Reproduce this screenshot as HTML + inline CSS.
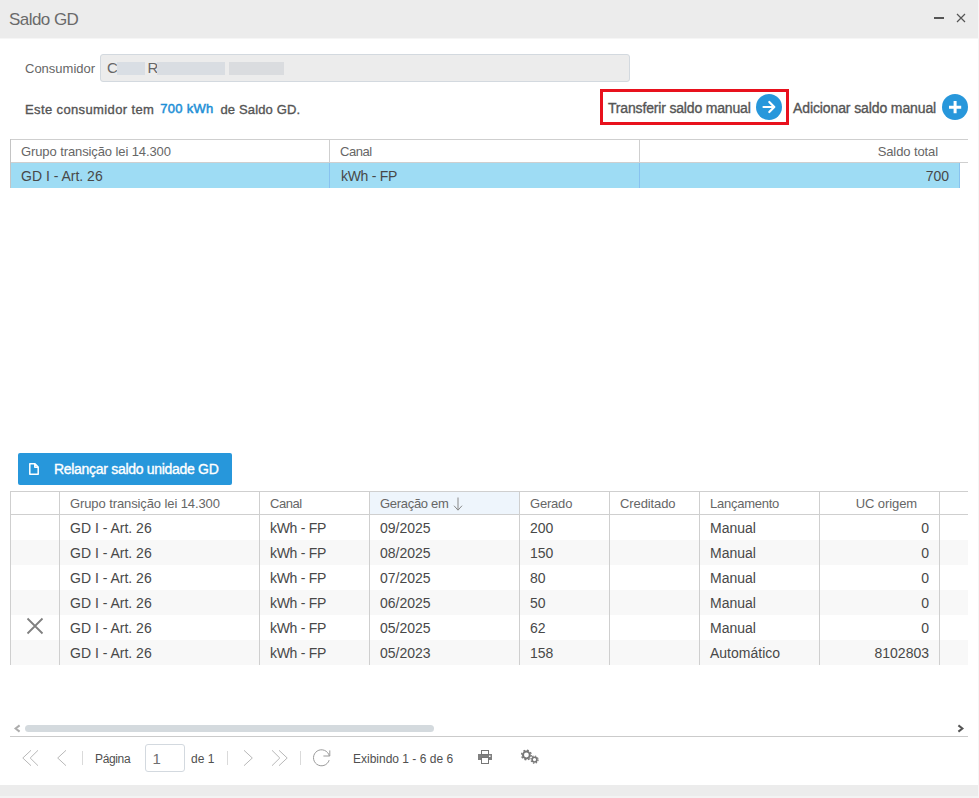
<!DOCTYPE html>
<html lang="pt-BR">
<head>
<meta charset="utf-8">
<title>Saldo GD</title>
<style>
*{box-sizing:border-box;margin:0;padding:0}
html,body{width:979px;height:798px;overflow:hidden;background:#fff}
body{font-family:"Liberation Sans",sans-serif;font-size:13px;color:#404040;position:relative}
.abs{position:absolute}
.titlebar{left:0;top:0;width:979px;height:38px;background:#ececec}
.title{left:9px;top:9px;font-size:17px;color:#6a6a6a;line-height:22px;white-space:nowrap;letter-spacing:-0.55px}
.bottombar{left:0;top:785px;width:979px;height:13px;background:#ececec}
.lbl{white-space:nowrap;line-height:16px}
.input{left:100px;top:54px;width:530px;height:28px;background:#ececec;border:1px solid #d3d9df;border-radius:3px}
.grid{border:1px solid #cfcfcf;background:#fff}
.hdr{letter-spacing:-0.1px;position:absolute;top:0;height:23px;border-right:1px solid #cfcfcf;color:#666;font-size:13px;line-height:23px;padding:0 10px;white-space:nowrap;overflow:hidden}
.row{position:absolute;left:0;height:25px}
.cell{position:absolute;top:0;height:25px;line-height:27px;padding:0 10px;font-size:14px;color:#484848;white-space:nowrap;border-right:1px solid #cfcfcf;overflow:hidden}
.r{text-align:right}
.sb{font-size:14px;color:#555;-webkit-text-stroke:0.35px #555}
.vl{top:0;width:1px;height:174px;background:#cfcfcf}
.h{letter-spacing:-0.1px;top:2px;height:22px;line-height:22px;font-size:13px;color:#666;white-space:nowrap}
.c{height:25px;line-height:27px;font-size:14px;color:#484848;white-space:nowrap}
</style>
</head>
<body>
<div class="abs titlebar"></div>
<div class="abs" style="left:0;top:38px;width:978px;height:1px;background:#f6f6f6"></div>
<div class="abs title">Saldo GD</div>
<div class="abs bottombar"></div>
<div class="abs" style="left:0;top:796px;width:979px;height:2px;background:#f3f3f3"></div>
<div class="abs" style="left:978px;top:0;width:1px;height:798px;background:#f6f6f6"></div>

<div class="abs lbl" style="left:25px;top:61px;color:#666">Consumidor</div>
<div class="abs input"></div>
<div class="abs lbl" style="left:107px;top:59px;color:#666;font-size:15px;line-height:18px">C</div>
<div class="abs lbl" style="left:147.5px;top:59px;color:#666;font-size:15px;line-height:18px">R</div>
<div class="abs" style="left:117px;top:62px;width:28px;height:13px;background:#d9dee4"></div>
<div class="abs" style="left:157px;top:62px;width:68px;height:13px;background:#d9dde2"></div>
<div class="abs" style="left:229px;top:62px;width:55px;height:13px;background:#dadcdf"></div>

<div class="abs lbl sb" id="t1" style="left:25px;top:102px;font-size:13px;letter-spacing:0.28px"><span id="s1" style="letter-spacing:0.38px">Este consumidor tem</span> <span id="s2" style="color:#1e8fd6;-webkit-text-stroke:0.5px #1e8fd6;position:relative;top:-1px;margin:0 3px 0 2px">700 kWh</span> <span id="s3" style="letter-spacing:0.15px">de Saldo GD.</span></div>

<div class="abs lbl sb" id="t2" style="left:608px;top:100px;letter-spacing:-0.17px">Transferir saldo manual</div>
<div class="abs lbl sb" id="t3" style="left:793px;top:100px;letter-spacing:-0.11px">Adicionar saldo manual</div>
<div class="abs" style="left:600px;top:89px;width:189px;height:36px;border:3px solid #e8111d"></div>

<!-- grid 1 -->
<div class="abs grid" style="left:10px;top:139px;width:958px;height:25px;border-bottom:none;border-right:none">
  <div class="hdr" style="left:0;width:319px">Grupo transição lei 14.300</div>
  <div class="hdr" style="left:319px;width:310px;letter-spacing:-0.45px">Canal</div>
  <div class="hdr r" style="left:629px;width:320px;padding-right:22px;border-right:none">Saldo total</div>
</div>
<div class="abs" style="left:10px;top:162px;width:958px;height:1px;background:#cfcfcf"></div>
<div class="abs" style="left:10px;top:163px;width:950px;height:25px;background:#9edcf4">
  <div class="cell" style="left:0;width:320px;padding-left:11px;border-right-color:#88c2ef">GD I - Art. 26</div>
  <div class="cell" style="left:320px;width:310px;padding-left:11px;letter-spacing:-0.3px;border-right-color:#88c2ef">kWh - FP</div>
  <div class="cell r" style="left:630px;width:320px;border-right-color:#88c2ef">700</div>
</div>

<div class="abs" style="left:10px;top:139px;width:1px;height:49px;background:#c4c4c4"></div>
<!-- title icons -->
<div class="abs" style="left:934px;top:17px;width:10px;height:2px;background:#555"></div>
<svg class="abs" style="left:955px;top:12px" width="12" height="12" viewBox="0 0 12 12"><path d="M2 2 L10 10 M10 2 L2 10" stroke="#555" stroke-width="1.2" fill="none"/></svg>

<!-- circle icons -->
<svg class="abs" style="left:756px;top:94px" width="26" height="26" viewBox="0 0 26 26"><circle cx="13" cy="13" r="13" fill="#2797db"/><path d="M7.5 13 H18 M13.3 8 L18.3 13 L13.3 18" stroke="#fff" stroke-width="2.2" fill="none" stroke-linecap="round" stroke-linejoin="round"/></svg>
<svg class="abs" style="left:942px;top:94px" width="26" height="26" viewBox="0 0 26 26"><circle cx="13" cy="13" r="13" fill="#2797db"/><path d="M7 13.2 H19.2 M13.1 7 V19.2" stroke="#fff" stroke-width="3" fill="none"/></svg>

<!-- button -->
<div class="abs" style="left:18px;top:453px;width:214px;height:32px;background:#2797db;border-radius:2px"></div>
<svg class="abs" style="left:27px;top:461px" width="14" height="16" viewBox="0 0 14 16"><path d="M2.8 2.8 H8 L11.2 6 V13.2 H2.8 Z M7.8 3 V6.2 H11" stroke="#fff" stroke-width="1.5" fill="none" stroke-linejoin="round"/></svg>
<div class="abs lbl sb" id="t4" style="left:54px;top:461px;letter-spacing:-0.3px;color:#fff;-webkit-text-stroke-color:#fff">Relançar saldo unidade GD</div>

<!-- grid 2 -->
<div class="abs" id="g2" style="left:10px;top:491px;width:958px;height:174px">
  <div class="abs" style="left:0;top:0;width:958px;height:1px;background:#cfcfcf"></div>
  <div class="abs" style="left:0;top:23px;width:958px;height:1px;background:#cfcfcf"></div>
  <div class="abs" style="left:360px;top:1px;width:149px;height:22px;background:#eef5fc"></div>
  <div class="abs" style="left:0;top:49px;width:958px;height:25px;background:#f8f8f8"></div>
  <div class="abs" style="left:0;top:99px;width:958px;height:25px;background:#f8f8f8"></div>
  <div class="abs" style="left:0;top:149px;width:958px;height:25px;background:#f8f8f8"></div>
  <div class="abs vl" style="left:0"></div>
  <div class="abs vl" style="left:49px"></div>
  <div class="abs vl" style="left:249px"></div>
  <div class="abs vl" style="left:359px"></div>
  <div class="abs vl" style="left:509px"></div>
  <div class="abs vl" style="left:599px"></div>
  <div class="abs vl" style="left:689px"></div>
  <div class="abs vl" style="left:809px"></div>
  <div class="abs vl" style="left:929px"></div>
  <div class="abs h" style="left:60px">Grupo transição lei 14.300</div>
  <div class="abs h" style="left:260px;letter-spacing:-0.45px">Canal</div>
  <div class="abs h" style="left:370px;letter-spacing:-0.3px">Geração em</div>
  <div class="abs h" style="left:520px;letter-spacing:-0.2px">Gerado</div>
  <div class="abs h" style="left:610px">Creditado</div>
  <div class="abs h" style="left:700px;letter-spacing:-0.25px">Lançamento</div>
  <div class="abs h" style="right:51px">UC origem</div>
  <svg class="abs" style="left:441px;top:5px" width="14" height="16" viewBox="0 0 14 16"><path d="M7 1.5 V14 M3 9.7 L7 14.2 L11 9.7" stroke="#888" stroke-width="1" fill="none"/></svg>
  <div class="abs c" style="left:60px;top:24px">GD I - Art. 26</div><div class="abs c" style="left:260px;top:24px;letter-spacing:-0.3px">kWh - FP</div><div class="abs c" style="left:370px;top:24px">09/2025</div><div class="abs c" style="left:520px;top:24px">200</div><div class="abs c" style="left:700px;top:24px">Manual</div><div class="abs c" style="right:39px;top:24px">0</div>
  <div class="abs c" style="left:60px;top:49px">GD I - Art. 26</div><div class="abs c" style="left:260px;top:49px;letter-spacing:-0.3px">kWh - FP</div><div class="abs c" style="left:370px;top:49px">08/2025</div><div class="abs c" style="left:520px;top:49px">150</div><div class="abs c" style="left:700px;top:49px">Manual</div><div class="abs c" style="right:39px;top:49px">0</div>
  <div class="abs c" style="left:60px;top:74px">GD I - Art. 26</div><div class="abs c" style="left:260px;top:74px;letter-spacing:-0.3px">kWh - FP</div><div class="abs c" style="left:370px;top:74px">07/2025</div><div class="abs c" style="left:520px;top:74px">80</div><div class="abs c" style="left:700px;top:74px">Manual</div><div class="abs c" style="right:39px;top:74px">0</div>
  <div class="abs c" style="left:60px;top:99px">GD I - Art. 26</div><div class="abs c" style="left:260px;top:99px;letter-spacing:-0.3px">kWh - FP</div><div class="abs c" style="left:370px;top:99px">06/2025</div><div class="abs c" style="left:520px;top:99px">50</div><div class="abs c" style="left:700px;top:99px">Manual</div><div class="abs c" style="right:39px;top:99px">0</div>
  <div class="abs c" style="left:60px;top:124px">GD I - Art. 26</div><div class="abs c" style="left:260px;top:124px;letter-spacing:-0.3px">kWh - FP</div><div class="abs c" style="left:370px;top:124px">05/2025</div><div class="abs c" style="left:520px;top:124px">62</div><div class="abs c" style="left:700px;top:124px">Manual</div><div class="abs c" style="right:39px;top:124px">0</div>
  <div class="abs c" style="left:60px;top:149px">GD I - Art. 26</div><div class="abs c" style="left:260px;top:149px;letter-spacing:-0.3px">kWh - FP</div><div class="abs c" style="left:370px;top:149px">05/2023</div><div class="abs c" style="left:520px;top:149px">158</div><div class="abs c" style="left:700px;top:149px">Automático</div><div class="abs c" style="right:39px;top:149px">8102803</div>
  <svg class="abs" style="left:15px;top:125px" width="20" height="20" viewBox="0 0 20 20"><path d="M2.5 2.5 L17.5 17.5 M17.5 2.5 L2.5 17.5" stroke="#808080" stroke-width="1.8" fill="none"/></svg>
</div>

<!-- scrollbar -->
<svg class="abs" style="left:12px;top:723px" width="10" height="11" viewBox="0 0 10 11"><path d="M7.6 2.4 L3.6 5.5 L7.6 8.6" stroke="#adadad" stroke-width="2" fill="none"/></svg>
<svg class="abs" style="left:956px;top:723px" width="10" height="11" viewBox="0 0 10 11"><path d="M2.4 2.4 L6.4 5.5 L2.4 8.6" stroke="#555" stroke-width="2" fill="none"/></svg>
<div class="abs" style="left:25px;top:725px;width:409px;height:7px;background:#d4dade;border-radius:3.5px"></div>

<!-- paging toolbar -->
<div class="abs" style="left:10px;top:736px;width:958px;height:1px;background:#cbcbcb"></div>
<svg class="abs" style="left:20px;top:748px" width="20" height="20" viewBox="0 0 20 20"><path d="M11 2.3 L2.8 10 L11 17.7 M18 2.3 L10.2 10 L18 17.7" stroke="#b8b8b8" stroke-width="1" fill="none"/></svg>
<svg class="abs" style="left:52px;top:748px" width="20" height="20" viewBox="0 0 20 20"><path d="M14 2.3 L5.7 10 L14 17.7" stroke="#b8b8b8" stroke-width="1" fill="none"/></svg>
<div class="abs" style="left:82px;top:751px;width:1px;height:14px;background:#dadada"></div>
<div class="abs lbl" id="p1" style="left:95px;top:751px;font-size:12px;color:#505050;letter-spacing:-0.35px">Página</div>
<div class="abs" style="left:145px;top:744px;width:40px;height:28px;border:1px solid #d3d9df;border-radius:3px;background:#fff"></div>
<div class="abs lbl" style="left:152.5px;top:750px;font-size:15px;color:#707070;line-height:18px">1</div>
<div class="abs lbl" id="p2" style="left:191px;top:751px;font-size:12px;color:#505050">de 1</div>
<div class="abs" style="left:227px;top:751px;width:1px;height:14px;background:#dadada"></div>
<svg class="abs" style="left:238px;top:748px" width="20" height="20" viewBox="0 0 20 20"><path d="M6 2.3 L14.3 10 L6 17.7" stroke="#b8b8b8" stroke-width="1" fill="none"/></svg>
<svg class="abs" style="left:270px;top:748px" width="20" height="20" viewBox="0 0 20 20"><path d="M2 2.3 L9.8 10 L2 17.7 M9 2.3 L17.2 10 L9 17.7" stroke="#b8b8b8" stroke-width="1" fill="none"/></svg>
<div class="abs" style="left:300px;top:751px;width:1px;height:14px;background:#dadada"></div>
<svg class="abs" style="left:311.5px;top:748px" width="20" height="20" viewBox="0 0 20 20"><path d="M17.15 12.14 A8 8 0 1 1 17.3 8 M17.8 2.4 V8 H11.4" stroke="#9a9a9a" stroke-width="1" fill="none"/></svg>
<div class="abs lbl" id="p3" style="left:353px;top:751px;font-size:12px;color:#505050">Exibindo 1 - 6 de 6</div>
<!-- printer -->
<svg class="abs" style="left:477px;top:749px" width="16" height="16" viewBox="0 0 16 16"><rect x="1" y="5" width="14" height="6" fill="#808080"/><rect x="4.5" y="1.5" width="7" height="4" fill="#fff" stroke="#777" stroke-width="1"/><rect x="4.5" y="8.5" width="7" height="6" fill="#fff" stroke="#777" stroke-width="1"/><rect x="12" y="6.5" width="1.5" height="1.5" fill="#fff"/></svg>
<!-- gears -->
<svg class="abs" style="left:519px;top:748px" width="22" height="18" viewBox="0 0 22 18"><circle cx="7.4" cy="7" r="3.4" stroke="#777" stroke-width="2" fill="none"/><circle cx="7.4" cy="7" r="4.8" stroke="#777" stroke-width="1.4" fill="none" stroke-dasharray="1.9 1.87"/><circle cx="15.5" cy="11.6" r="2.4" stroke="#777" stroke-width="1.6" fill="none"/><circle cx="15.5" cy="11.6" r="3.6" stroke="#777" stroke-width="1.2" fill="none" stroke-dasharray="1.4 1.43"/></svg>

</body>
</html>
